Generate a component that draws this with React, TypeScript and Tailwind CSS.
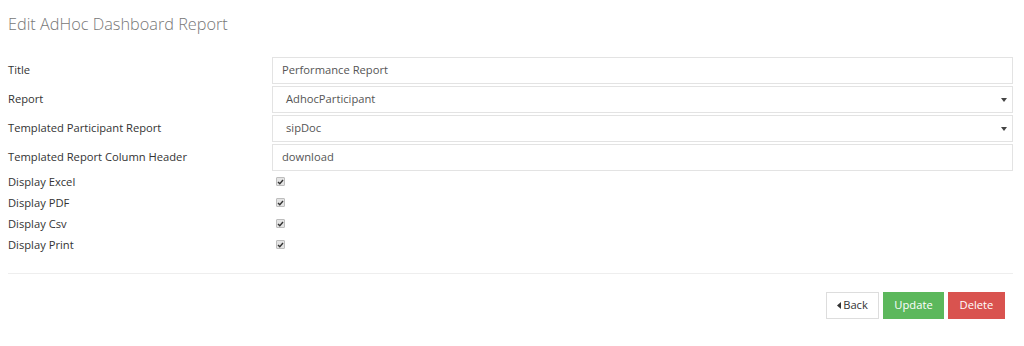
const font = "font-['Open_Sans',_'Liberation_Sans',_sans-serif]";

export default function App() {
  return (
    <div className={`${font} min-h-screen bg-white pl-[8px] pr-[11px] text-[11.2px] text-[#333]`}>
      <h1 className="pt-[14px] text-[16.3px] font-light leading-[20px] text-[#777]">
        Edit AdHoc Dashboard Report
      </h1>

      <form className="mt-[23px] flex flex-col">
        <div className="flex flex-col gap-[2px]">
          <TextRow label="Title" value="Performance Report" />
          <SelectRow label="Report" value="AdhocParticipant" />
          <SelectRow label="Templated Participant Report" value="sipDoc" />
          <TextRow label="Templated Report Column Header" value="download" />
        </div>

        <div className="flex flex-col">
          <CheckRow label="Display Excel" />
          <CheckRow label="Display PDF" />
          <CheckRow label="Display Csv" />
          <CheckRow label="Display Print" />
        </div>

        <hr className="mt-[18px] border-t border-[#eee]" />

        <div className="mt-[18px] flex justify-end gap-[4px] pr-[8px]">
          <button
            type="button"
            className="flex h-[27px] w-[53px] items-center justify-center border border-[#ddd] bg-white text-[11.2px] text-[#333]"
          >
            <svg width="4" height="7" viewBox="0 0 4 7" className="mr-[2px]">
              <polygon points="4,0 4,7 0,3.5" fill="#333" />
            </svg>
            Back
          </button>
          <button
            type="button"
            className="h-[27px] w-[61px] border border-[#5cb85c] bg-[#5cb85c] text-[11.2px] text-white"
          >
            Update
          </button>
          <button
            type="button"
            className="h-[27px] w-[57px] border border-[#d9534f] bg-[#d9534f] text-[11.2px] text-white"
          >
            Delete
          </button>
        </div>
      </form>
    </div>
  );
}

function TextRow({ label, value }: { label: string; value: string }) {
  return (
    <div className="flex h-[27px] items-center">
      <label className="w-[264px] shrink-0 pb-[2px] leading-[16px]">{label}</label>
      <div className="flex h-full flex-1 items-center border border-[#e3e3e3] bg-white pl-[9px] text-[#555]">
        {value}
      </div>
    </div>
  );
}

function SelectRow({ label, value }: { label: string; value: string }) {
  return (
    <div className="flex h-[27px] items-center">
      <label className="w-[264px] shrink-0 pb-[2px] leading-[16px]">{label}</label>
      <div className="flex h-full flex-1 items-center justify-between border border-[#e3e3e3] bg-white pl-[13px] pr-[5px] text-[#555]">
        <span>{value}</span>
        <svg width="6" height="4" viewBox="0 0 6 4">
          <polygon points="0,0 6,0 3,4" fill="#444" />
        </svg>
      </div>
    </div>
  );
}

function CheckRow({ label }: { label: string }) {
  return (
    <div className="flex h-[21px] items-center">
      <label className="w-[264px] shrink-0 leading-[16px]">{label}</label>
      <span className="ml-[4px] flex h-[9px] w-[9px] items-center justify-center rounded-[1px] border border-[#bdbdbd] bg-[#e4e4e4]">
        <svg width="7" height="6" viewBox="0 0 7 6">
          <polyline points="1,3 2.8,4.8 6,1" fill="none" stroke="#333" strokeWidth="1.4" />
        </svg>
      </span>
    </div>
  );
}
